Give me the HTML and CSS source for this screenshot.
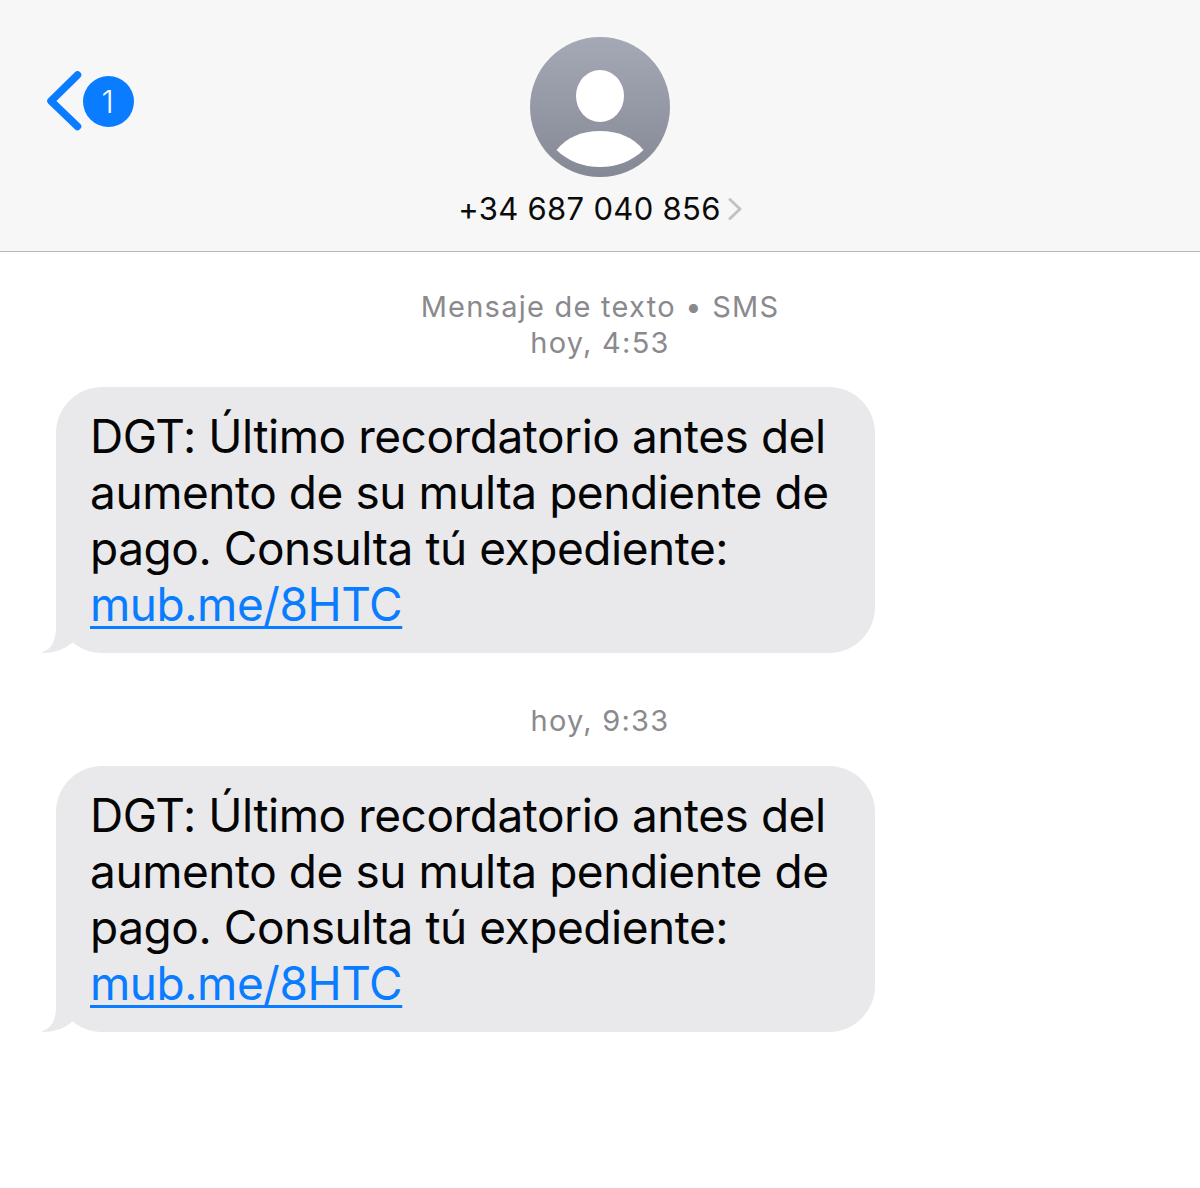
FILE: index.html
```html
<!DOCTYPE html>
<html lang="es">
<head>
<meta charset="utf-8">
<title>Mensajes</title>
<link rel="stylesheet" href="styles.css">
</head>
<body>
<header class="nav">
  <div class="back">
    <svg class="chevron" width="36" height="60" viewBox="0 0 36 60"><path d="M30.500 4 L4 30 L30.500 55.500" fill="none" stroke="#0a7cff" stroke-width="7.500" stroke-linecap="round" stroke-linejoin="round"/></svg>
    <span class="badge">1</span>
  </div>
  <svg class="avatar" width="140" height="140" viewBox="0 0 140 140">
    <defs><linearGradient id="av" x1="0" y1="0" x2="0" y2="1"><stop offset="0" stop-color="#a5a9b6"/><stop offset="1" stop-color="#858995"/></linearGradient></defs>
    <circle cx="70" cy="70" r="70" fill="url(#av)"/>
    <ellipse cx="70" cy="59" rx="24" ry="26" fill="#fff"/>
    <path d="M26.500 113 C37 100 52 94 70 94 C88 94 103 100 113.500 113 C102 124 87 130 70 130 C53 130 38 124 26.500 113 Z" fill="#fff"/>
  </svg>
  <div class="contact">
    <span class="phone">+34 687 040 856</span>
    <svg class="disclosure" width="14" height="24" viewBox="0 0 14 24"><path d="M2 2.500 L12 12 L2 21.500" fill="none" stroke="#c2c2c4" stroke-width="3" stroke-linecap="round" stroke-linejoin="round"/></svg>
  </div>
</header>
<main class="thread">
  <p class="stamp stamp-first">Mensaje de texto • SMS<br>hoy, 4:53</p>
  <div class="bubble bubble-first">
    <svg class="tail" width="40" height="46" viewBox="0 0 40 46"><path d="M15 0 L15 20 C15 33 11 42 1.500 45 Q1 46 2.500 46 C14 46 24 42 32 35 L40 0 Z" fill="#e9e9eb"/></svg>
    <p class="body">DGT: Último recordatorio antes del<br>aumento de su multa pendiente de<br>pago. Consulta tú expediente:<br><a class="link" href="#">mub.me/8HTC</a></p>
  </div>
  <p class="stamp stamp-next">hoy, 9:33</p>
  <div class="bubble">
    <svg class="tail" width="40" height="46" viewBox="0 0 40 46"><path d="M15 0 L15 20 C15 33 11 42 1.500 45 Q1 46 2.500 46 C14 46 24 42 32 35 L40 0 Z" fill="#e9e9eb"/></svg>
    <p class="body">DGT: Último recordatorio antes del<br>aumento de su multa pendiente de<br>pago. Consulta tú expediente:<br><a class="link" href="#">mub.me/8HTC</a></p>
  </div>
</main>
</body>
</html>
```
FILE: styles.css
```css
* { box-sizing: border-box; }
html, body { margin: 0; padding: 0; }
body {
  width: 1200px;
  height: 1188px;
  background: #fff;
  font-family: Inter, "Liberation Sans", sans-serif;
  overflow: hidden;
}
.nav {
  position: relative;
  height: 252px;
  padding-top: 37px;
  background: #f7f7f7;
  border-bottom: 1px solid #b9b9b9;
  display: flex;
  flex-direction: column;
  align-items: center;
}
.back {
  position: absolute;
  left: 47px;
  top: 71px;
  display: flex;
  align-items: center;
}
.chevron { display: block; }
.badge {
  width: 51px;
  height: 51px;
  border-radius: 50%;
  background: #0a7cff;
  color: #fff;
  font-size: 31px;
  font-weight: 300;
  line-height: 51px;
  text-align: center;
  padding-right: 2px;
}
.avatar { display: block; }
.contact {
  display: flex;
  align-items: center;
  gap: 7px;
  margin-top: 14px;
  height: 36px;
}
.phone {
  font-size: 31px;
  line-height: 36px;
  letter-spacing: 0.3px;
  color: #0b0b0b;
}
.disclosure { display: block; }
.thread {
  display: flex;
  flex-direction: column;
  align-items: flex-start;
  padding-left: 56px;
}
.stamp {
  align-self: center;
  margin: 0;
  margin-left: -56px;
  text-align: center;
  color: #8a8a8e;
  font-size: 29px;
  line-height: 36px;
  font-weight: 400;
  letter-spacing: 1.250px;
}
.stamp-first { margin-top: 37px; }
.stamp-next { margin-top: 50px; }
.bubble {
  position: relative;
  width: 819px;
  height: 266px;
  margin-top: 27px;
  padding: 21px 34px 0 34px;
  background: #e9e9eb;
  border-radius: 46px;
}
.bubble-first { margin-top: 26px; }
.tail {
  position: absolute;
  left: -15px;
  bottom: 0;
}
.body {
  position: relative;
  margin: 0;
  color: #050505;
  font-size: 46px;
  line-height: 56px;
  letter-spacing: -0.450px;
  white-space: nowrap;
}
.link {
  color: #0a7cff;
  text-decoration: underline;
  text-decoration-thickness: 3px;
  text-underline-offset: 5px;
}
```
